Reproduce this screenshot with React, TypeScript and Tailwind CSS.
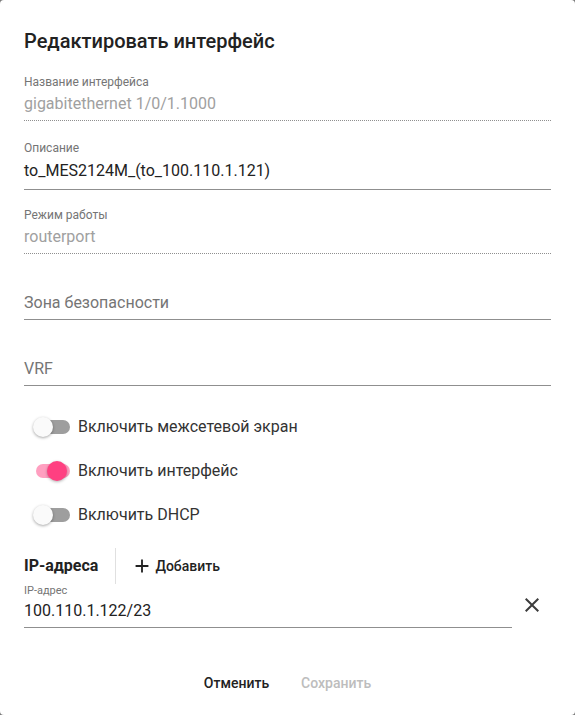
import { useState } from 'react';

const font = { fontFamily: 'Roboto, "Noto Sans", sans-serif' };

function ReadOnlyField({ label, value }: { label: string; value: string }) {
  return (
    <div className="flex flex-col">
      <div className="h-[14px] text-xs leading-[14px] text-[#757575]">{label}</div>
      <div className="mt-[5px] h-[19px] text-base leading-[19px] text-[#a0a0a0]">{value}</div>
      <div className="mt-[7px] border-b border-dotted border-[#8f8f8f]" />
    </div>
  );
}

function EmptyField({ label }: { label: string }) {
  return (
    <div className="flex h-[49px] flex-col justify-end border-b border-[#8f8f8f]">
      <div className="mb-[7px] h-[19px] text-base leading-[19px] text-[#757575]">{label}</div>
    </div>
  );
}

function Toggle({ label, checked, onChange }: { label: string; checked: boolean; onChange: () => void }) {
  return (
    <button onClick={onChange} className="flex h-[44px] items-center text-left">
      <span className="relative ml-[9px] h-[20px] w-[37px]">
        <span
          className={
            checked
              ? 'absolute left-[3px] top-[3px] h-[14px] w-[34px] rounded-full bg-[#ff9fc0]'
              : 'absolute left-[3px] top-[3px] h-[14px] w-[34px] rounded-full bg-[#9e9e9e]'
          }
        />
        <span
          className={
            checked
              ? 'absolute left-[14px] top-0 h-[20px] w-[20px] rounded-full bg-[#ff4081] shadow-[0_1px_3px_rgba(0,0,0,0.3)]'
              : 'absolute left-0 top-0 h-[20px] w-[20px] rounded-full bg-[#fafafa] shadow-[0_1px_3px_rgba(0,0,0,0.35)]'
          }
        />
      </span>
      <span className="ml-[8px] text-base text-[#333333]">{label}</span>
    </button>
  );
}

export default function App() {
  const [firewall, setFirewall] = useState(false);
  const [enabled, setEnabled] = useState(true);
  const [dhcp, setDhcp] = useState(false);

  return (
    <div className="h-[715px] w-[575px] bg-[#7a7a7a]" style={font}>
      <div className="flex h-full w-full flex-col rounded-[4px] bg-white px-6">
        {/* Title */}
        <h2 className="mt-[25px] h-[32px] text-xl font-medium leading-[32px] text-[#222222]">
          Редактировать интерфейс
        </h2>

        <div className="mt-[18px]">
          <ReadOnlyField label="Название интерфейса" value="gigabitethernet 1/0/1.1000" />
        </div>

        {/* Description */}
        <div className="mt-[20px] flex flex-col">
          <div className="h-[14px] text-xs leading-[14px] text-[#757575]">Описание</div>
          <div className="mt-[6px] h-[19px] text-base leading-[19px] text-[#222222]">
            to_MES2124M_(to_100.110.1.121)
          </div>
          <div className="mt-[9px] border-b border-[#8f8f8f]" />
        </div>

        <div className="mt-[18px]">
          <ReadOnlyField label="Режим работы" value="routerport" />
        </div>

        <div className="mt-[17px]">
          <EmptyField label="Зона безопасности" />
        </div>
        <div className="mt-[17px]">
          <EmptyField label="VRF" />
        </div>

        {/* Toggles */}
        <div className="mt-[19px] flex flex-col items-start">
          <Toggle label="Включить межсетевой экран" checked={firewall} onChange={() => setFirewall((v) => !v)} />
          <Toggle label="Включить интерфейс" checked={enabled} onChange={() => setEnabled((v) => !v)} />
          <Toggle label="Включить DHCP" checked={dhcp} onChange={() => setDhcp((v) => !v)} />
        </div>

        {/* IP addresses */}
        <div className="mt-[11px] flex h-[36px] items-center">
          <span className="text-base font-bold text-[#222222]">IP-адреса</span>
          <span className="ml-[17px] h-full border-l border-[#e0e0e0]" />
          <button className="ml-[17px] flex items-center text-sm font-medium text-[#222222]">
            <svg width="22" height="22" viewBox="0 0 24 24" className="-ml-[2px]" fill="#222222">
              <path d="M19 13h-6v6h-2v-6H5v-2h6V5h2v6h6v2z" />
            </svg>
            <span className="ml-[2px]">Добавить</span>
          </button>
        </div>

        <div className="flex items-end">
          <div className="flex flex-1 flex-col">
            <div className="h-[14px] text-[11px] leading-[14px] text-[#757575]">IP-адрес</div>
            <div className="mt-[3px] h-[19px] text-base leading-[19px] text-[#222222]">100.110.1.122/23</div>
            <div className="mt-[7px] border-b border-[#8f8f8f]" />
          </div>
          <div className="flex h-[44px] w-[39px] items-start justify-center pt-[9px]">
            <svg width="24" height="24" viewBox="0 0 24 24" fill="#3c3c3c">
              <path d="M19 6.41L17.59 5 12 10.59 6.41 5 5 6.41 10.59 12 5 17.59 6.41 19 12 13.41 17.59 19 19 17.59 13.41 12z" />
            </svg>
          </div>
        </div>

        {/* Actions */}
        <div className="mt-[45px] flex justify-center gap-[32px] text-sm font-medium">
          <button className="text-[#222222]">Отменить</button>
          <button className="text-[#bdbdbd]" disabled>
            Сохранить
          </button>
        </div>
      </div>
    </div>
  );
}
